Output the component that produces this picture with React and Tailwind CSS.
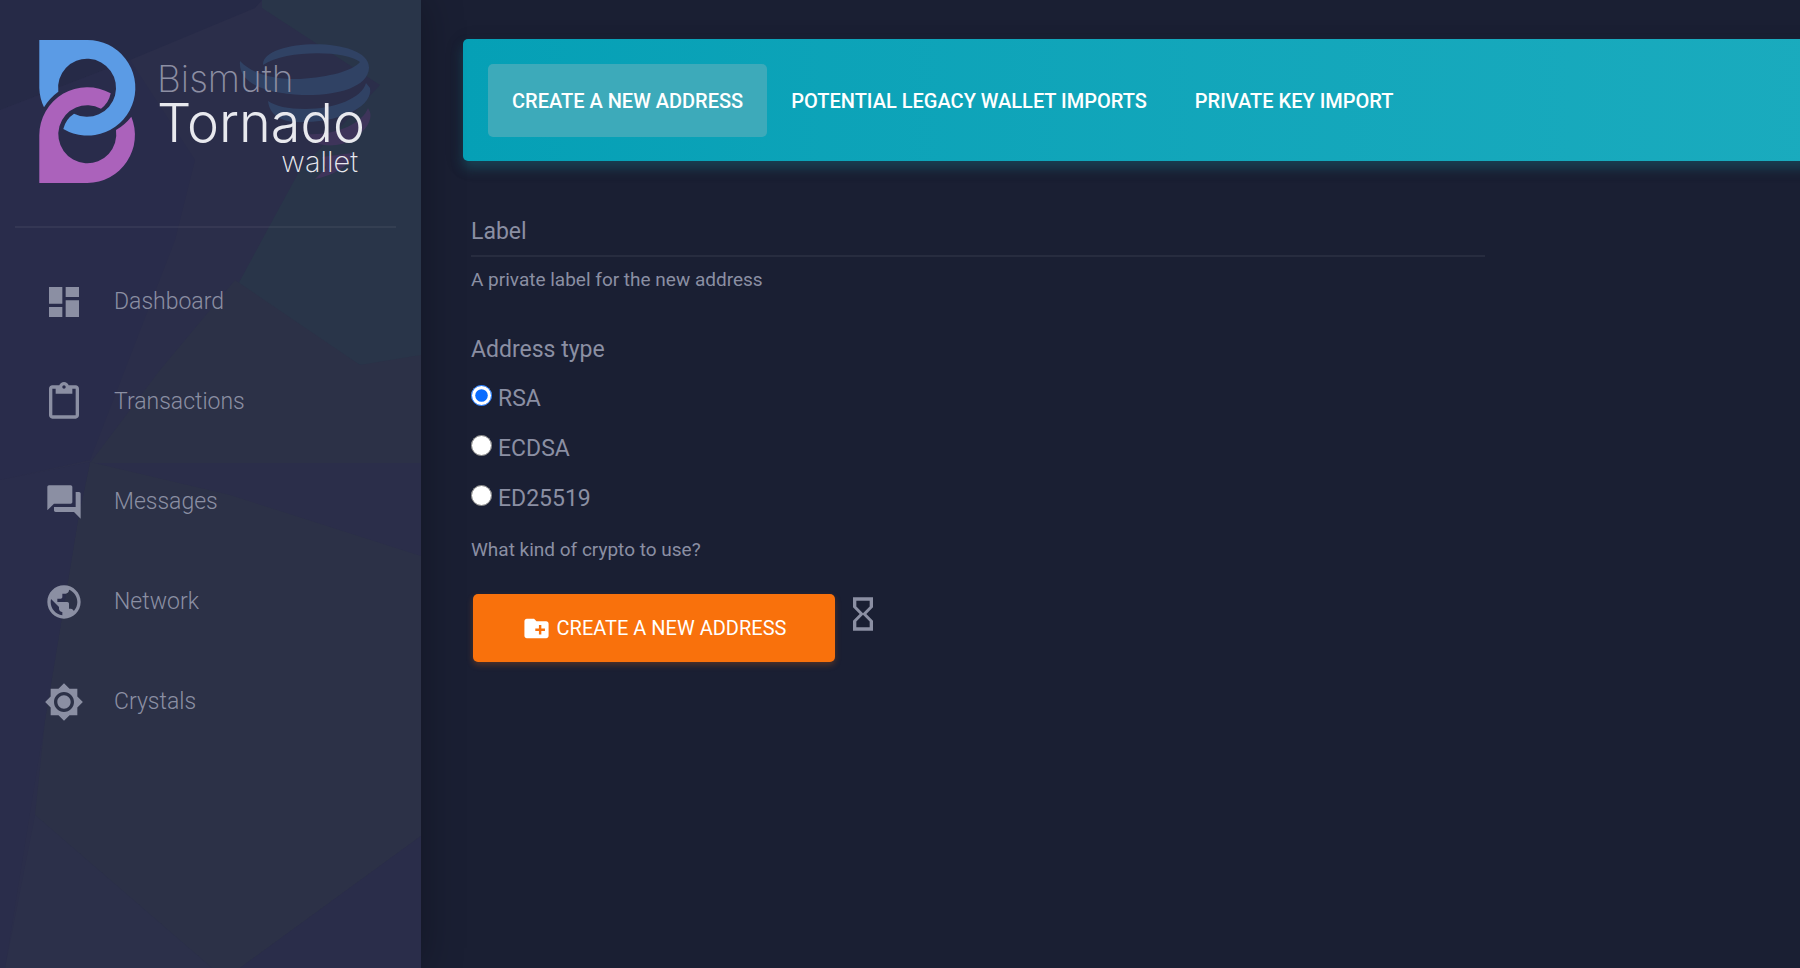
import { useState } from "react";
import {
  MdDashboard,
  MdContentPaste,
  MdForum,
  MdPublic,
  MdBrightness7,
  MdCreateNewFolder,
  MdHourglassEmpty,
} from "react-icons/md";

const navItems = [
  { name: "Dashboard", icon: MdDashboard },
  { name: "Transactions", icon: MdContentPaste },
  { name: "Messages", icon: MdForum },
  { name: "Network", icon: MdPublic },
  { name: "Crystals", icon: MdBrightness7 },
];

const tabs = [
  "Create a new address",
  "Potential legacy wallet imports",
  "Private key import",
];

const addressTypes = ["RSA", "ECDSA", "ED25519"];

// Low-poly backdrop behind the sidebar
const SidebarBackdrop = () => (
  <svg
    className="absolute inset-0 w-full h-full"
    viewBox="0 0 421 968"
    preserveAspectRatio="none"
    aria-hidden="true"
  >
    <rect width="421" height="968" fill="#2b2e4a" />
    <path d="M0 0H262L255 8L130 60L0 110Z" fill="#262a47" />
    <path d="M0 110L130 60L195 160L175 240L90 460L0 480Z" fill="#292c4b" />
    <path d="M262 0H421V360L360 365L235 290L270 225L300 170L380 85L262 8Z" fill="#293549" />
    <path d="M235 280L360 365L421 355V463H90L160 370Z" fill="#2c3147" />
    <path d="M90 462L230 495L421 556V836L240 968H212L35 815L45 720L78 520Z" fill="#2c3147" />
    <path d="M0 480L90 462L78 520L45 720L5 968H0Z" fill="#2a2d4b" />
    <path d="M421 836V968H240Z" fill="#2a2d4a" />
    <path d="M35 815L212 968H5Z" fill="#2c304a" />
  </svg>
);

const Logo = () => (
  <svg
    className="block w-[380px] h-[190px]"
    viewBox="0 0 380 190"
    role="img"
    aria-label="Bismuth Tornado wallet"
  >
    {/* tornado swirl */}
    <g fill="#304264">
      <path d="M263 65C262 38 370 36 369 68C368 88 335 96 302 95C262 93 238 82 240 61C252 74 275 80 300 79C330 77 352 71 360 62C345 50 285 50 263 65Z" />
      <path d="M268 101C270 120 290 123 305 122C345 121 373 105 370 88L366 83C362 98 335 109 305 109C288 109 275 106 268 101Z" />
    </g>
    <g fill="#3e345a">
      <path d="M305 134C312 146 330 147 342 144C362 137 373 122 370 112L368 108C362 124 335 136 305 134Z" />
      <path d="M322 157L352 153C350 168 330 176 315 179L326 168Z" />
    </g>
    {/* interlocking B */}
    <path
      d="M39.3 40H87.3A47.8 47.8 0 1 1 63.3 129A25 25 0 0 1 74 113.7A29 29 0 1 0 58.3 91.7A52 52 0 0 0 44 107.3A48 48 0 0 1 39.3 88Z"
      fill="#5b9be5"
    />
    <path
      d="M39.3 183V135.3A48 48 0 0 1 110.7 93.3A25 25 0 0 1 101 108.7A29 29 0 1 0 116 130A52 52 0 0 0 131.3 116.7A48 48 0 0 1 87.3 183Z"
      fill="#ab62bb"
    />
    <g fontFamily="Inter, sans-serif">
      <text x="157" y="92" fontSize="37" fontWeight="200" fill="#8d8fa3">Bismuth</text>
      <text x="157" y="142" fontSize="54" fontWeight="300" fill="#e8e9ee">Tornado</text>
      <text x="358" y="172" fontSize="29" fontWeight="200" fill="#e8e9ee" textAnchor="end">wallet</text>
    </g>
  </svg>
);

const Sidebar = () => (
  <aside className="relative w-[421px] shrink-0 overflow-hidden shadow-[0_0_40px_rgba(0,0,0,0.3)]">
    <SidebarBackdrop />
    <div className="relative">
      <Logo />
      <div className="mt-9 ml-[15px] mr-[25px] border-t-2 border-white/5" />
      <nav className="mt-6 flex flex-col">
        {navItems.map(({ name, icon: Icon }) => (
          <a
            key={name}
            href="#"
            className="flex h-[100px] items-center gap-[30px] pl-11 text-[23px] font-light text-[#8b8fa3]"
          >
            <Icon size={40} />
            {name}
          </a>
        ))}
      </nav>
    </div>
  </aside>
);

const Tabs = () => {
  const [active, setActive] = useState(tabs[0]);

  return (
    <div className="-mr-6 flex rounded-[5px] bg-linear-to-r from-[#05a0b6] to-[#1aabbe] px-[25px] pt-[25px] pb-6 shadow-[0_4px_20px_rgba(0,0,0,0.14),0_7px_12px_rgba(30,130,150,0.4)]">
      {tabs.map((tab) => (
        <button
          key={tab}
          type="button"
          onClick={() => setActive(tab)}
          className={`h-[73px] rounded-[5px] px-6 text-[20px] font-medium uppercase text-white ${
            active === tab ? "bg-[#3daaba]" : ""
          }`}
        >
          {tab}
        </button>
      ))}
    </div>
  );
};

const AddressForm = () => {
  const [label, setLabel] = useState("");
  const [type, setType] = useState("RSA");

  return (
    <form className="mt-12 pl-2 text-[#8b8fa3]" onSubmit={(e) => e.preventDefault()}>
      <div className="w-4/5 max-w-[1014px]">
        <input
          id="label"
          aria-label="Label"
          placeholder="Label"
          value={label}
          onChange={(e) => setLabel(e.target.value)}
          className="block h-12 w-full border-b-2 border-white/6 bg-transparent pb-0.5 text-[23px] outline-none placeholder:text-[#8b8fa3]"
        />
        <label htmlFor="label" className="mt-[9px] block text-[19px] leading-7">
          A private label for the new address
        </label>
      </div>

      <fieldset className="mt-10">
        <legend className="mb-2 text-[23px] leading-8">Address type</legend>
        {addressTypes.map((item) => (
          <label key={item} className="flex h-[50px] items-center gap-[6px] text-[23px]">
            <input
              type="radio"
              name="address-type"
              checked={type === item}
              onChange={() => setType(item)}
              className="mb-2 h-[21px] w-[21px] accent-[#0a6cff]"
            />
            {item}
          </label>
        ))}
        <p className="mt-3 text-[19px] leading-7">What kind of crypto to use?</p>
      </fieldset>

      <div className="mt-[30px] flex gap-2 pl-0.5">
        <button
          type="submit"
          className="flex h-[68px] w-[362px] items-center justify-center gap-[6px] rounded-[5px] bg-[#f9710c] text-[20px] uppercase text-white shadow-[0_3px_6px_rgba(249,113,12,0.25)]"
        >
          <MdCreateNewFolder size={29} />
          Create a new address
        </button>
        <MdHourglassEmpty size={40} />
      </div>
    </form>
  );
};

const App = () => (
  <div className="flex min-h-screen overflow-hidden bg-[#1a1f33] font-[Roboto,sans-serif]">
    <Sidebar />
    <main className="min-w-0 flex-1 pl-[42px] pt-[39px]">
      <Tabs />
      <AddressForm />
    </main>
  </div>
);

export default App;
